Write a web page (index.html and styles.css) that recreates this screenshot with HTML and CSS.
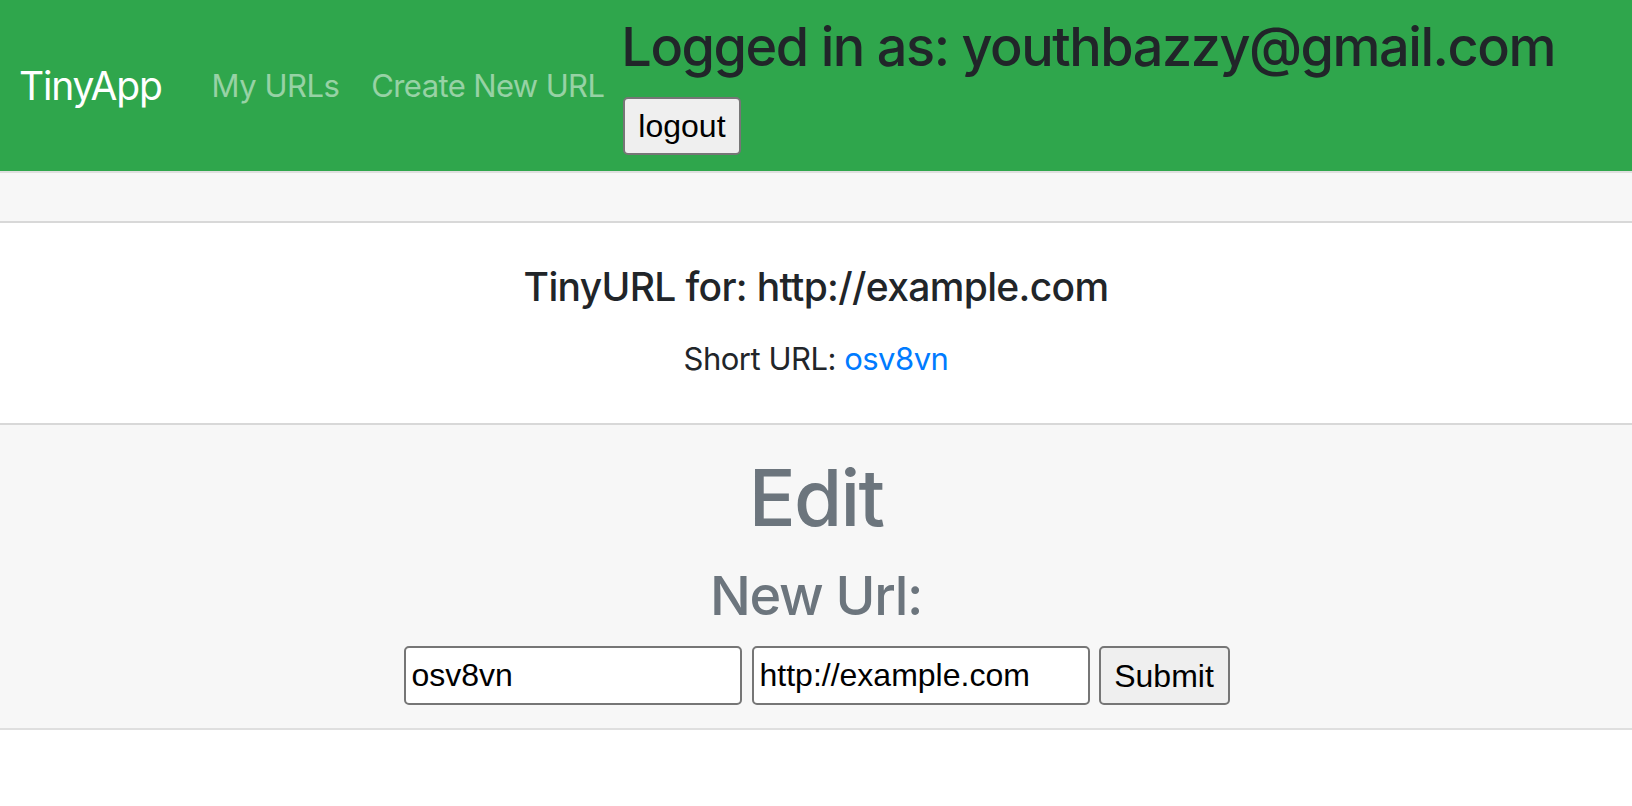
FILE: index.html
```html
<!DOCTYPE html>
<html lang="en">
<head>
<meta charset="utf-8">
<title>TinyApp</title>
<link rel="stylesheet" href="styles.css">
</head>
<body>
<nav class="navbar">
  <a class="brand" href="#">TinyApp</a>
  <ul class="nav">
    <li><a class="nav-link" href="#">My URLs</a></li>
    <li><a class="nav-link nav-link-wide" href="#">Create New URL</a></li>
  </ul>
  <div class="user">
    <h3 class="user-title">Logged in as: youthbazzy@gmail.com</h3>
    <form class="logout-form"><button class="btn btn-logout" type="button">logout</button></form>
  </div>
</nav>
<div class="card">
  <div class="card-header"></div>
  <div class="card-body">
    <h5 class="card-title">TinyURL for: http://example.com</h5>
    <p class="card-text">Short URL: <a class="link" href="#">osv8vn</a></p>
  </div>
  <div class="card-footer">
    <h1 class="edit-title">Edit</h1>
    <h3 class="edit-sub">New Url:</h3>
    <form class="edit-form">
      <input class="field" type="text" value="osv8vn">
      <input class="field field-last" type="text" value="http://example.com">
      <button class="btn btn-submit" type="button">Submit</button>
    </form>
  </div>
</div>
</body>
</html>
```

FILE: styles.css
```css
* { box-sizing: border-box; }
html, body { margin: 0; padding: 0; }
body {
  font-family: Inter, "Noto Sans", sans-serif;
  font-size: 31px;
  line-height: 1.5;
  color: #212529;
  background: #fff;
}
a { text-decoration: none; }

.navbar {
  display: flex;
  align-items: center;
  background: #2fa64c;
  padding: 16px 19px;
  height: 171px;
  white-space: nowrap;
}
.brand {
  flex-shrink: 0;
  color: #fff;
  font-size: 39px;
  letter-spacing: -0.031em;
  line-height: 60px;
  padding: 10px 0;
  margin-right: 34px;
}
.nav {
  display: flex;
  flex-shrink: 0;
  list-style: none;
  margin: 0;
  padding: 0;
}
.nav-link {
  display: block;
  color: rgba(255, 255, 255, 0.5);
  font-size: 31px;
  letter-spacing: -0.016em;
  padding: 16px 16px;
  line-height: 48px;
}
.nav-link-wide { letter-spacing: -0.02em; }
.user {
  display: flex;
  flex-shrink: 0;
  flex-direction: column;
  align-items: flex-start;
  margin-left: 1px;
}
.user-title {
  margin: 0 0 20px;
  font-size: 54px;
  font-weight: 500;
  letter-spacing: -0.027em;
  line-height: 60px;
  color: #212529;
}
.logout-form { margin: 0; }
.btn {
  font-family: "Liberation Sans", Arial, sans-serif;
  font-size: 32px;
  line-height: 48px;
  padding: 0 13px;
  border: 2px solid #767676;
  border-radius: 5px;
  background: #efefef;
  color: #000;
}
.btn-logout {
  height: 58px;
  margin: 0 0 0 2px;
}

.card {
  border-top: 2px solid rgba(0, 0, 0, 0.125);
  border-bottom: 2px solid rgba(0, 0, 0, 0.125);
  text-align: center;
}
.card-header {
  height: 50px;
  background: #f7f7f7;
  border-bottom: 2px solid rgba(0, 0, 0, 0.125);
}
.card-body {
  padding: 40px;
}
.card-title {
  margin: 0 0 24px;
  font-size: 39px;
  font-weight: 500;
  letter-spacing: -0.017em;
  line-height: 48px;
}
.card-text {
  margin: 0;
  font-size: 31px;
  letter-spacing: -0.016em;
  line-height: 48px;
}
.link { color: #007bff; }

.card-footer {
  background: #f7f7f7;
  border-top: 2px solid rgba(0, 0, 0, 0.125);
  padding: 24px 40px 23px;
  color: #6c757d;
}
.edit-title {
  margin: 0 0 16px;
  font-size: 78px;
  font-weight: 500;
  letter-spacing: -0.022em;
  line-height: 97px;
}
.edit-sub {
  margin: 0 0 16px;
  font-size: 54px;
  font-weight: 500;
  letter-spacing: -0.024em;
  line-height: 68px;
}
.edit-form {
  display: flex;
  justify-content: center;
  margin: 0;
  padding-left: 1px;
}
.field {
  width: 338px;
  height: 59px;
  margin-right: 10px;
  font-family: "Liberation Sans", Arial, sans-serif;
  font-size: 32px;
  color: #000;
  padding: 2px 6px;
  border: 2px solid #767676;
  border-radius: 5px;
  background: #fff;
}
.field-last { margin-right: 9px; }
.btn-submit {
  width: 131px;
  height: 59px;
  padding: 0;
  margin: 0;
}
```
